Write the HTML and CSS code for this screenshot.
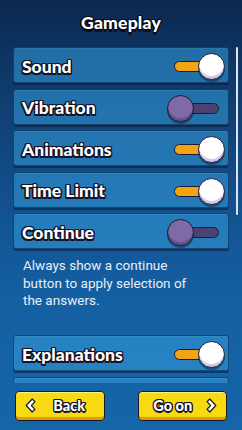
FILE: index.html
```html
<!DOCTYPE html>
<html>
<head>
<meta charset="utf-8">
<link rel="stylesheet" href="styles.css">
</head>
<body>
<div class="screen">
  <h1 class="title">Gameplay</h1>
  <div class="scroller">
    <div class="list">
      <div class="row"><span class="label">Sound</span><span class="toggle on"><span class="track"></span><span class="knob"></span></span></div>
      <div class="row"><span class="label">Vibration</span><span class="toggle off"><span class="track"></span><span class="knob"></span></span></div>
      <div class="row"><span class="label">Animations</span><span class="toggle on"><span class="track"></span><span class="knob"></span></span></div>
      <div class="row"><span class="label">Time Limit</span><span class="toggle on"><span class="track"></span><span class="knob"></span></span></div>
      <div class="row"><span class="label">Continue</span><span class="toggle off"><span class="track"></span><span class="knob"></span></span></div>
      <p class="desc">Always show a continue<br>button to apply selection of<br>the answers.</p>
      <div class="row"><span class="label">Explanations</span><span class="toggle on"><span class="track"></span><span class="knob"></span></span></div>
      <div class="row"><span class="label">Hints</span><span class="toggle on"><span class="track"></span><span class="knob"></span></span></div>
    </div>
    <div class="scrollbar"><div class="thumb"></div></div>
  </div>
  <div class="footer">
    <button class="btn back">
      <svg class="chev" width="11" height="15" viewBox="0 0 11 15"><path d="M7.2 1 L1.2 7.5 L7.2 14 L10 11.3 L6.4 7.5 L10 3.7 Z" fill="#fff" stroke="#1a1a2a" stroke-width="1.2" stroke-linejoin="round"/></svg>
      <span class="btn-label">Back</span>
    </button>
    <button class="btn go">
      <span class="btn-label">Go on</span>
      <svg class="chev" width="11" height="15" viewBox="0 0 11 15"><path d="M3.8 1 L9.8 7.5 L3.8 14 L1 11.3 L4.6 7.5 L1 3.7 Z" fill="#fff" stroke="#1a1a2a" stroke-width="1.2" stroke-linejoin="round"/></svg>
    </button>
  </div>
</div>
</body>
</html>
```

FILE: styles.css
```css
html, body {
  margin: 0;
  padding: 0;
}
body {
  width: 242px;
  height: 430px;
  overflow: hidden;
}
.screen {
  width: 242px;
  height: 430px;
  background: linear-gradient(180deg, #0b2850 0%, #0f3b6c 20%, #124f8c 45%, #1460a3 70%, #1565a8 100%);
  font-family: "Lato", "Roboto", sans-serif;
  display: flex;
  flex-direction: column;
}
.title {
  margin: 0;
  height: 47px;
  line-height: 45px;
  box-sizing: border-box;
  text-align: center;
  font-size: 17.5px;
  font-weight: 900;
  color: #fff;
  letter-spacing: 0.2px;
  text-shadow:
    -1px -1px 0 #0d0d1a, 1px -1px 0 #0d0d1a, -1px 1px 0 #0d0d1a, 1px 1px 0 #0d0d1a,
    0 -1.5px 0 #0d0d1a, 0 1.5px 0 #0d0d1a, -1.5px 0 0 #0d0d1a, 1.5px 0 0 #0d0d1a,
    0 2.5px 0 #0d0d1a;
}
.scroller {
  height: 336px;
  overflow: hidden;
  display: flex;
  padding-left: 13px;
  gap: 7px;
}
.list {
  width: 216px;
  flex: none;
  display: flex;
  flex-direction: column;
  gap: 5.5px;
}
.row {
  flex: none;
  height: 36px;
  box-sizing: border-box;
  background: rgba(52, 156, 218, 0.55);
  border: 1px solid rgba(8, 28, 58, 0.55);
  border-radius: 3px;
  box-shadow: 0 2px 0 rgba(8, 30, 62, 0.6), inset 0 1px 0 rgba(255, 255, 255, 0.06);
  display: flex;
  align-items: center;
  justify-content: space-between;
  padding: 3px 3px 0 8px;
}
.label {
  font-size: 17.5px;
  font-weight: 900;
  color: #fff;
  line-height: 20px;
  text-shadow:
    -1px -1px 0 #14142a, 1px -1px 0 #14142a, -1px 1px 0 #14142a, 1px 1px 0 #14142a,
    0 -1.4px 0 #14142a, 0 1.4px 0 #14142a, -1.4px 0 0 #14142a, 1.4px 0 0 #14142a,
    0 2.4px 0 #14142a, 1px 2px 0 #14142a, -1px 2px 0 #14142a;
}
.toggle {
  position: relative;
  width: 58px;
  height: 27px;
  flex: none;
}
.track {
  position: absolute;
  left: 7px;
  right: 6px;
  top: 8px;
  height: 11px;
  border-radius: 6px;
  box-sizing: border-box;
  border: 1px solid #1c1a36;
}
.on .track {
  background: #f2a414;
}
.off .track {
  background: #4c4272;
}
.knob {
  position: absolute;
  top: 0;
  width: 27px;
  height: 27px;
  border-radius: 50%;
  box-sizing: border-box;
  border: 1.5px solid #1a1832;
}
.on .knob {
  right: 0;
  background: #fff;
  box-shadow: inset 0 -3px 0 #cfcbea, 0 2px 0 rgba(10, 20, 50, 0.45);
}
.off .knob {
  left: 0;
  background: #7e6aa8;
  box-shadow: inset 0 -3px 0 #66548f, 0 2px 0 rgba(10, 20, 50, 0.45);
}
.desc {
  margin: 2.75px 0 19.75px 10px;
  font-family: "Roboto", "Liberation Sans", sans-serif;
  font-size: 13.5px;
  line-height: 17.5px;
  color: #e9eff6;
}
.scrollbar {
  width: 2px;
  flex: none;
}
.thumb {
  height: 168px;
  background: #dfe4ee;
  border-radius: 1px;
}
.footer {
  display: flex;
  justify-content: space-between;
  padding: 8px 15px 0 15px;
}
.btn {
  width: 89.5px;
  height: 30px;
  box-sizing: border-box;
  margin: 0;
  padding: 0 9px 2px 9px;
  background: #f8da12;
  border: 1px solid #1a1a26;
  border-radius: 4px;
  box-shadow: inset 0 -3px 0 #e09c05, inset 0 1px 0 #fff27a;
  display: flex;
  align-items: center;
  font-family: "Lato", "Roboto", sans-serif;
}
.btn-label {
  flex: 1;
  text-align: center;
  font-size: 14.5px;
  font-weight: 900;
  color: #fff;
  white-space: nowrap;
  text-shadow:
    -1px -1px 0 #14142a, 1px -1px 0 #14142a, -1px 1px 0 #14142a, 1px 1px 0 #14142a,
    0 -1.2px 0 #14142a, 0 1.2px 0 #14142a, -1.2px 0 0 #14142a, 1.2px 0 0 #14142a,
    0 2px 0 #14142a;
}
.back .btn-label {
  padding-left: 8px;
}
.go .btn-label {
  padding-right: 8px;
}
.chev {
  display: block;
  flex: none;
}
```
